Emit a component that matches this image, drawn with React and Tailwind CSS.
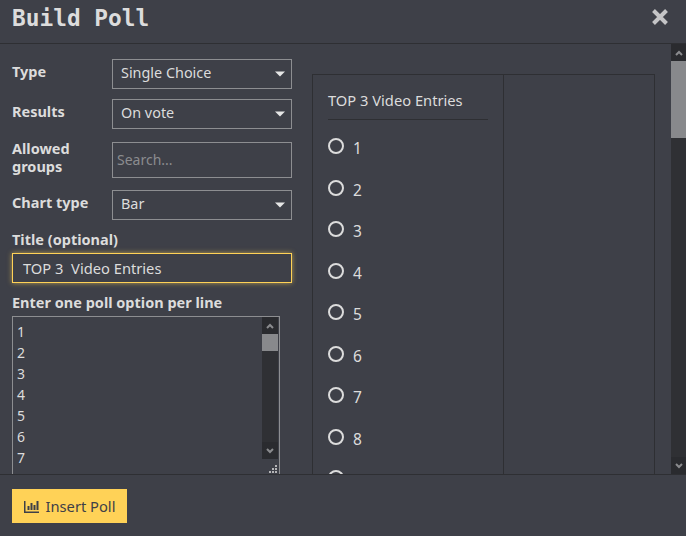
import React from 'react';

const options = ['1', '2', '3', '4', '5', '6', '7', '8', '9'];

const Caret = () => (
  <svg width="10" height="6" viewBox="0 0 10 6" className="shrink-0">
    <path d="M0 0.5h10L5 5.5z" fill="#e6e6e6" />
  </svg>
);

const ArrowUp = ({ color = '#8a8b8e' }) => (
  <svg width="8" height="6" viewBox="0 0 8 6">
    <path d="M1 5l3-3 3 3" fill="none" stroke={color} strokeWidth="2" />
  </svg>
);

const ArrowDown = ({ color = '#8a8b8e' }) => (
  <svg width="8" height="6" viewBox="0 0 8 6">
    <path d="M1 1l3 3 3-3" fill="none" stroke={color} strokeWidth="2" />
  </svg>
);

const Select = ({ value }) => (
  <div className="w-[180px] h-[30px] shrink-0 flex items-center justify-between pl-2 pr-[6px] border border-[#8d8e91] text-[14.4px] text-[#dcdcdc]">
    <span className="mb-[2px]">{value}</span>
    <Caret />
  </div>
);

const Row = ({ label, children, className, labelClass = 'pt-[3px] leading-[19px]' }) => (
  <div className={`flex justify-between ${className}`}>
    <span className={`font-bold text-[14.5px] text-[#dcdcdc] w-[80px] ${labelClass}`}>{label}</span>
    {children}
  </div>
);

const Scrollbar = ({ className, thumb, track }) => (
  <div className={`flex flex-col items-center ${className}`}>
    <div className="w-full h-[17px] flex items-center justify-center bg-[#2a2b2f]">
      <ArrowUp />
    </div>
    <div className={`w-full ${track}`}>
      <div className={`w-full bg-[#88898c] ${thumb}`} />
    </div>
    <div className="w-full h-[17px] flex items-center justify-center bg-[#2a2b2f]">
      <ArrowDown />
    </div>
  </div>
);

export default function App() {
  return (
    <div className="w-[686px] h-[536px] flex flex-col overflow-hidden bg-[#3e4048] font-['Noto_Sans',sans-serif] text-[#dcdcdc]">
      {/* Header */}
      <div className="h-[44px] shrink-0 flex items-start justify-between border-b border-[#2e2f33] pl-3 pr-[18px]">
        <h1 className="font-['DejaVu_Sans_Mono',monospace] text-[22.8px] leading-[36px] font-bold text-[#dcdcdc]">Build Poll</h1>
        <svg width="16" height="16" viewBox="0 0 16 16" className="mt-[9px]">
          <path d="M1.500 1.500l13 13M14.500 1.500l-13 13" stroke="#c4c4c6" strokeWidth="4" />
        </svg>
      </div>

      {/* Body */}
      <div className="flex-1 min-h-0 flex overflow-hidden">
        <div className="flex-1 min-w-0 flex pl-3 pr-4 gap-5 overflow-hidden">
          <div className="w-[280px] shrink-0 pt-[15px]">
            <Row label="Type" className="mb-[10px]">
              <Select value="Single Choice" />
            </Row>
            <Row label="Results" className="mb-[13px]">
              <Select value="On vote" />
            </Row>
            <Row label="Allowed groups" className="mb-3" labelClass="-mt-[3px] leading-[18px]">
              <div className="w-[180px] h-[36px] flex items-center px-1 border border-[#8d8e91] text-[14px] text-[#8b8c8f]">
                <span className="mb-[2px]">Search...</span>
              </div>
            </Row>
            <Row label="Chart type">
              <Select value="Bar" />
            </Row>
            <div className="font-bold text-[14.5px] leading-[19px] mt-[10px] mb-[4px]">Title (optional)</div>
            <div className="h-[30px] flex items-center px-[10px] border border-[#ffd257] shadow-[0_0_5px_rgba(255,210,87,0.6)] text-[14.7px] whitespace-pre">TOP 3  Video Entries</div>
            <div className="font-bold text-[14.5px] leading-[19px] mt-[10px] mb-[4px]">Enter one poll option per line</div>
            <div className="relative w-[268px] h-[158px] border-x border-t border-[#8d8e91] flex justify-between overflow-hidden">
              <div className="pl-1 pt-[4px] text-[14px] leading-[21px] text-[#dcdcdc]">
                {options.slice(0, 7).map((o) => (
                  <div key={o}>{o}</div>
                ))}
              </div>
              <Scrollbar className="w-[16px] h-[142px] mr-px" track="flex-1 bg-[#2f3034]" thumb="h-[17px]" />
              <svg width="9" height="9" viewBox="0 0 9 9" className="absolute right-[2px] bottom-0">
                <path d="M7 0h2v2H7zM4 3h2v2H4zM7 3h2v2H7zM1 6h2v2H1zM4 6h2v2H4zM7 6h2v2H7z" fill="#b5b5b7" />
              </svg>
            </div>
          </div>

          {/* Preview */}
          <div className="w-[343px] h-[500px] shrink-0 mt-[30px] border border-[#2e2f33] flex">
            <div className="w-[191px] border-r border-[#2e2f33] px-[15px] shrink-0">
              <div className="h-[45px] border-b border-[#2e2f33] w-[160px] text-[14.7px] leading-[50px] text-[#dcdcdc]">TOP 3 Video Entries</div>
              <div className="pt-[18px] flex flex-col gap-[20px]">
                {options.map((o) => (
                  <div key={o} className="flex items-start h-[21.5px] text-[15.5px] leading-[22px]">
                    <div className="w-4 h-4 rounded-full border-2 border-[#dcdcdc] mr-[9px]" />
                    <span className="-mt-[1px]">{o}</span>
                  </div>
                ))}
              </div>
            </div>
          </div>
        </div>
        <Scrollbar className="w-[15px] shrink-0 bg-[#2f3034]" track="flex-1" thumb="h-[77px]" />
      </div>

      {/* Footer */}
      <div className="h-[62px] shrink-0 border-t border-[#2e2f33] pl-3 pt-[14px]">
        <button className="w-[115px] h-[34px] flex items-center justify-center gap-[7px] bg-[#ffd257] text-[14.7px] text-[#3e4048]">
          <svg width="15" height="13" viewBox="0 0 15 13">
            <path d="M0 1h1.500v10.500H15V13H0z" fill="#3e4048" />
            <path d="M3.500 6h2v4h-2zM6.500 3h2v7h-2zM9.500 5h2v5h-2zM12.500 1h2v9h-2z" fill="#3e4048" />
          </svg>
          Insert Poll
        </button>
      </div>
    </div>
  );
}
